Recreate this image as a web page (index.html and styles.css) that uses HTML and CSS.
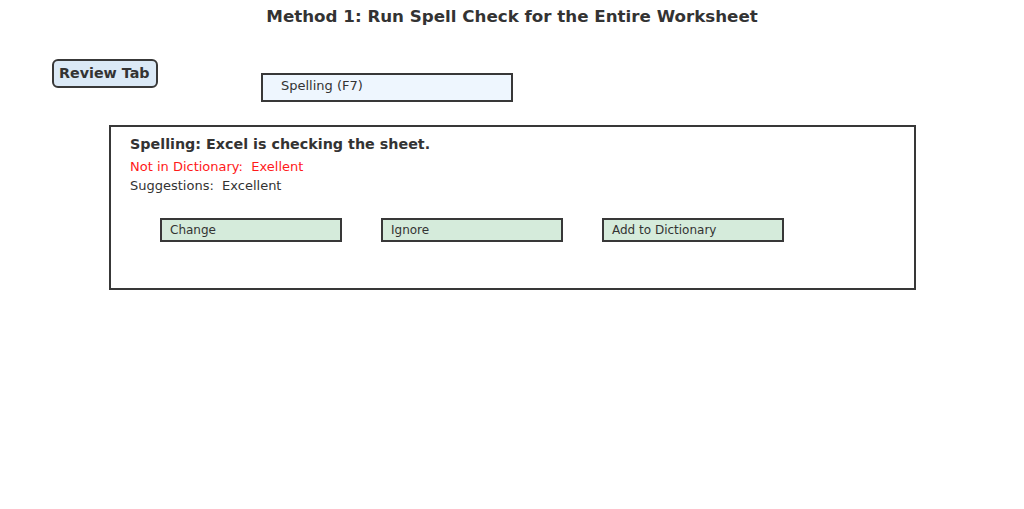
FILE: index.html
```html
<!DOCTYPE html>
<html>
<head>
<meta charset="utf-8">
<link rel="stylesheet" href="styles.css">
</head>
<body>
<h1 class="title">Method 1: Run Spell Check for the Entire Worksheet</h1>
<div class="ribbon">
  <div class="review-tab">Review Tab</div>
  <div class="spelling-cmd">Spelling (F7)</div>
</div>
<div class="dialog">
  <div class="dialog-title">Spelling: Excel is checking the sheet.</div>
  <div class="not-in-dict">Not in Dictionary:&nbsp; Exellent</div>
  <div class="suggestions">Suggestions:&nbsp; Excellent</div>
  <div class="buttons">
    <div class="btn">Change</div>
    <div class="btn">Ignore</div>
    <div class="btn">Add to Dictionary</div>
  </div>
</div>
</body>
</html>
```

FILE: styles.css
```css
html, body {
  margin: 0;
  padding: 0;
  background: #ffffff;
}
body {
  width: 1024px;
  height: 509px;
  font-family: "DejaVu Sans", sans-serif;
  color: #333333;
}
.title {
  margin: 0;
  padding-top: 6px;
  height: 22px;
  line-height: 20px;
  font-size: 16.7px;
  font-weight: bold;
  text-align: center;
  color: #333333;
}
.ribbon {
  display: flex;
  align-items: flex-start;
  margin-top: 32px;
  padding-left: 52px;
}
.review-tab {
  box-sizing: border-box;
  width: 106px;
  height: 29px;
  margin-top: -1px;
  border: 2px solid #383838;
  border-radius: 6px;
  background: #dbe9f6;
  font-size: 14.3px;
  font-weight: bold;
  line-height: 25px;
  padding-left: 5px;
}
.spelling-cmd {
  box-sizing: border-box;
  margin-left: 103px;
  margin-top: 13px;
  width: 252px;
  height: 29px;
  border: 2px solid #383838;
  background: #eef6fe;
  font-size: 13px;
  line-height: 21px;
  padding-left: 18px;
}
.dialog {
  box-sizing: border-box;
  margin-left: 109px;
  margin-top: 23px;
  width: 807px;
  height: 165px;
  border: 2px solid #383838;
  padding: 7px 0 0 19px;
}
.dialog-title {
  font-size: 14.3px;
  font-weight: bold;
  line-height: 20px;
}
.not-in-dict {
  margin-top: 4px;
  font-size: 13px;
  line-height: 18px;
  color: #ff1a1a;
}
.suggestions {
  margin-top: 1px;
  font-size: 13px;
  line-height: 18px;
}
.buttons {
  display: flex;
  gap: 39px;
  margin-top: 23px;
  padding-left: 30px;
}
.btn {
  box-sizing: border-box;
  width: 182px;
  height: 24px;
  border: 2px solid #383838;
  background: #d5ebdb;
  font-size: 12px;
  line-height: 21px;
  padding-left: 8px;
}
```
